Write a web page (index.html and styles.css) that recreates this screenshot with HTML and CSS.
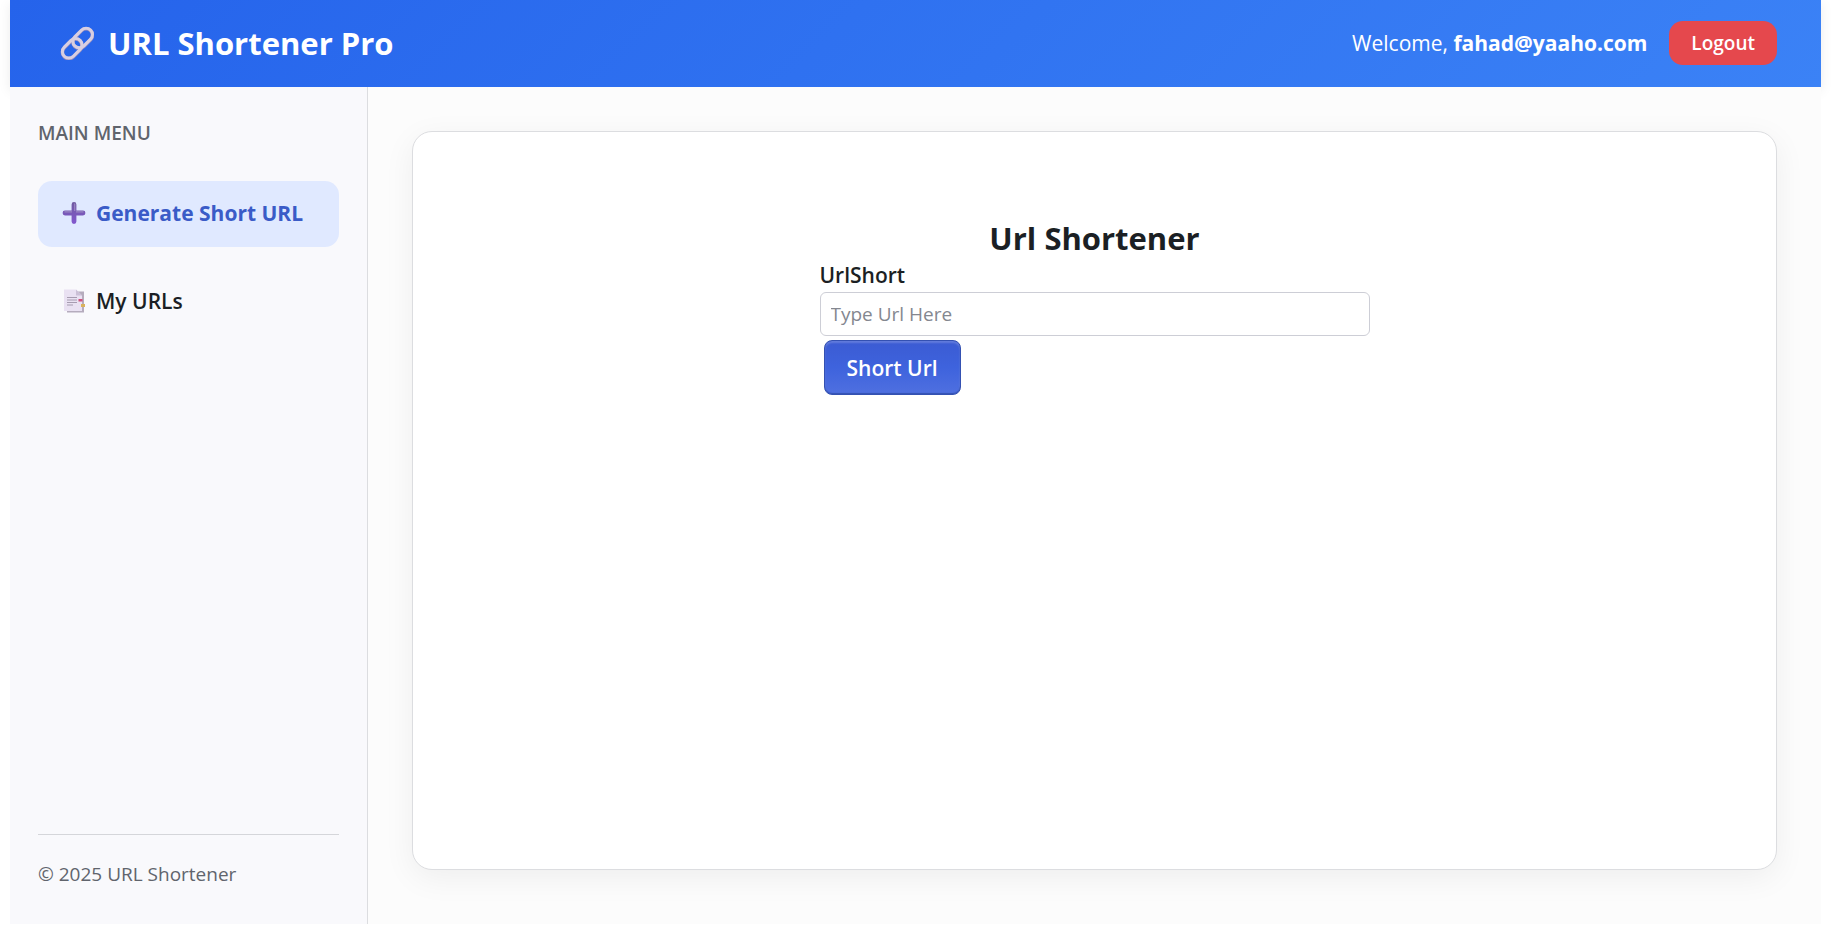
FILE: index.html
```html
<!DOCTYPE html>
<html lang="en">
<head>
<meta charset="utf-8">
<meta name="viewport" content="width=device-width, initial-scale=1">
<title>URL Shortener Pro</title>
<link rel="stylesheet" href="styles.css">
</head>
<body>
<div class="app">
  <header class="topbar">
    <h1 class="brand">
      <svg class="brand-icon" viewBox="0 0 34 34" aria-hidden="true">
        <g fill="none">
          <g stroke="#9d90bd" stroke-width="3.600">
            <rect x="11.500" y="6.100" width="22.400" height="12.800" rx="6.400" transform="rotate(-45 22.700 12.500)"/>
            <rect x="1" y="16.400" width="22.400" height="12.800" rx="6.400" transform="rotate(-45 12.200 22.800)"/>
          </g>
          <g stroke="#d8cfe2" stroke-width="3">
            <rect x="11.500" y="5.600" width="22.400" height="12.800" rx="6.400" transform="rotate(-45 22.700 12)"/>
            <rect x="1" y="15.900" width="22.400" height="12.800" rx="6.400" transform="rotate(-45 12.200 22.300)"/>
          </g>
        </g>
      </svg>
      <span>URL Shortener Pro</span>
    </h1>
    <div class="account">
      <p class="welcome">Welcome, <strong>fahad@yaaho.com</strong></p>
      <button class="logout" type="button">Logout</button>
    </div>
  </header>
  <div class="body">
    <aside class="sidebar">
      <h2 class="menu-title">MAIN MENU</h2>
      <nav class="menu">
        <a class="menu-link active" href="#generate" aria-current="page">
          <svg class="menu-icon" viewBox="0 0 24 24" aria-hidden="true">
            <defs>
              <linearGradient id="plus" x1="0" y1="0" x2="0" y2="1">
                <stop offset="0" stop-color="#6f5aa0"/>
                <stop offset="1" stop-color="#8257cf"/>
              </linearGradient>
            </defs>
            <path d="M12 1a2.400 2.400 0 0 1 2.400 2.400v6.200h6.600a2.400 2.400 0 0 1 0 4.800h-6.600v6.200a2.400 2.400 0 0 1-4.800 0v-6.200H3a2.400 2.400 0 0 1 0-4.800h6.600V3.400A2.400 2.400 0 0 1 12 1z" fill="url(#plus)"/>
            <path d="M2.500 10.800H10M14 10.800h7.500M12.700 2.500V10" stroke="#9a86c4" stroke-width="1.200" fill="none"/>
          </svg>
          Generate Short URL
        </a>
        <a class="menu-link" href="#urls">
          <svg class="menu-icon" viewBox="0 0 24 24" aria-hidden="true">
            <path d="M14 2.500h8v21H5v-2z" fill="#b5acbd"/>
            <path d="M2 .500h12l6 6v15.500H2z" fill="#e9e1f2"/>
            <path d="M14 .500l6 6h-6z" fill="#cbc0d6"/>
            <path d="M5 8.500h10M5 11h10M5 13.500h10M5 16h6" stroke="#a69cb0" stroke-width="1" fill="none"/>
            <rect x="16.500" y="10" width="4" height="2.500" fill="#d0527c"/>
            <rect x="19" y="15" width="4" height="3" fill="#d9b25c"/>
          </svg>
          My URLs
        </a>
      </nav>
      <p class="copyright">© 2025 URL Shortener</p>
    </aside>
    <main class="content">
      <section class="card">
        <form class="shortener">
          <h2 class="form-title">Url Shortener</h2>
          <label class="form-label" for="url">UrlShort</label>
          <input class="form-input" id="url" type="text" placeholder="Type Url Here">
          <button class="submit" type="button">Short Url</button>
        </form>
      </section>
    </main>
  </div>
</div>
</body>
</html>
```
FILE: styles.css
```css
* {
  box-sizing: border-box;
}

body {
  margin: 0;
  padding: 0 11px 11px 10px;
  background: #fff;
  color: #1b1f24;
  font-family: "Open Sans", "Noto Sans", sans-serif;
  font-size: 21px;
}

h1, h2, p {
  margin: 0;
}

.app {
  display: flex;
  flex-direction: column;
  min-height: calc(100vh - 11px);
}

.topbar {
  display: flex;
  align-items: center;
  justify-content: space-between;
  height: 87px;
  padding: 0 44px 2px 50px;
  background: linear-gradient(135deg, #2563eb, #3b82f6);
  box-shadow: 0 4px 12px rgba(0, 0, 0, 0.08);
  color: #fff;
}

.brand {
  display: flex;
  align-items: center;
  gap: 14px;
  font-size: 31px;
  font-weight: 700;
}

.brand-icon {
  width: 34px;
  height: 34px;
}

.account {
  display: flex;
  align-items: center;
  gap: 22px;
}

.welcome {
  font-size: 21px;
}

.logout {
  height: 44px;
  padding: 0 22px;
  border: 0;
  border-radius: 14px;
  background: #e5484d;
  color: #fff;
  font: 600 19px "Open Sans", sans-serif;
}

.body {
  position: relative;
  display: flex;
  flex: 1;
}

.sidebar {
  display: flex;
  flex-direction: column;
  width: 358px;
  padding: 32px 28px 36px;
  border-right: 1px solid #dcdde0;
  background: #f9f9fc;
}

.menu-title {
  color: #60646c;
  font-size: 19px;
  font-weight: 600;
  line-height: 28px;
}

.menu {
  display: flex;
  flex: 1;
  flex-direction: column;
  gap: 22px;
  padding-top: 34px;
}

.menu-link {
  display: flex;
  align-items: center;
  gap: 10px;
  height: 66px;
  padding: 0 24px 2px;
  border-radius: 14px;
  color: #1b1f24;
  font-size: 21px;
  font-weight: 600;
  text-decoration: none;
  white-space: nowrap;
}

.menu-link.active {
  background: #e0e9ff;
  color: #3a5bc7;
  font-weight: 700;
}

.menu-icon {
  width: 24px;
  height: 24px;
}

.copyright {
  padding-top: 25px;
  border-top: 1px solid #d5d6da;
  color: #60646c;
  font-size: 19px;
  line-height: 28px;
}

.content {
  display: flex;
  flex: 1;
  padding: 44px 44px 54px;
  background: #fcfcfc;
}

.card {
  flex: 1;
  padding: 86px 0;
  border: 1px solid #dcdde0;
  border-radius: 20px;
  background: #fff;
  box-shadow: 0 8px 32px rgba(0, 0, 0, 0.06);
}

.shortener {
  display: flex;
  flex-direction: column;
  width: 550px;
  max-width: 100%;
  margin: 0 auto;
}

.form-title {
  font-size: 31px;
  font-weight: 700;
  line-height: 40px;
  text-align: center;
}

.form-label {
  font-size: 21px;
  font-weight: 600;
  line-height: 34px;
}

.form-input {
  width: 100%;
  height: 44px;
  padding: 0 10px 1px;
  border: 1px solid #cdced6;
  border-radius: 6px;
  background: #fff;
  color: #1b1f24;
  font: 19px "Open Sans", sans-serif;
}

.form-input::placeholder {
  color: #84878f;
}

.submit {
  align-self: flex-start;
  height: 55px;
  margin: 4px;
  padding: 0 22px;
  border: 1px solid #3451b2;
  border-radius: 8px;
  background: linear-gradient(#3b5bd3, #3e63dd 50%, #4f70e0);
  box-shadow: inset 0 2px 2px rgba(255, 255, 255, 0.2), inset 0 -1px 1px #3451b2;
  color: #fff;
  font: 600 21px "Open Sans", sans-serif;
}
```
